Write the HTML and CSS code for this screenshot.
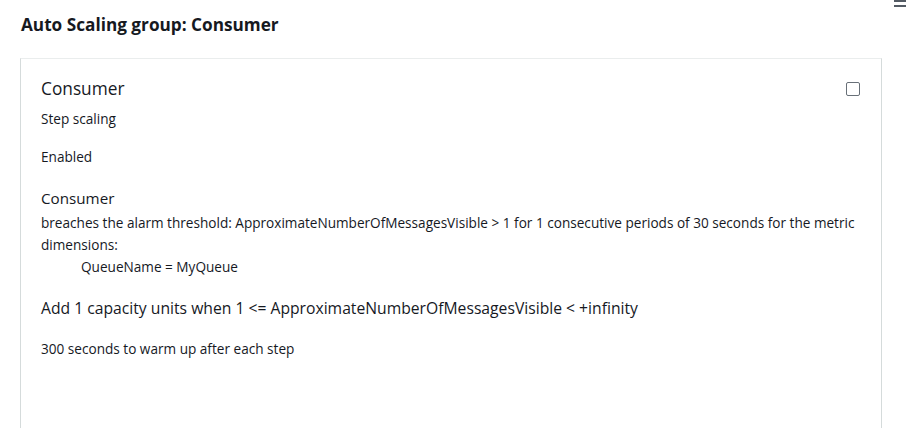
FILE: index.html
```html
<!DOCTYPE html>
<html>
<head>
<meta charset="utf-8">
<link rel="stylesheet" href="styles.css">
</head>
<body>
<div class="menu-icon"><span></span><span></span></div>
<h1 class="page-title">Auto Scaling group: Consumer</h1>
<div class="card">
  <div class="card-head">
    <div class="policy-name">Consumer</div>
    <span class="checkbox"></span>
  </div>
  <div class="line type">Step scaling</div>
  <div class="line enabled">Enabled</div>
  <div class="alarm-name">Consumer</div>
  <div class="alarm-desc">breaches the alarm threshold: ApproximateNumberOfMessagesVisible &gt; 1 for 1 consecutive periods of 30 seconds for the metric dimensions:</div>
  <div class="dimension">QueueName = MyQueue</div>
  <div class="step">Add 1 capacity units when 1 &lt;= ApproximateNumberOfMessagesVisible &lt; +infinity</div>
  <div class="line warmup">300 seconds to warm up after each step</div>
</div>
</body>
</html>
```
FILE: styles.css
```css
html, body {
  margin: 0;
  padding: 0;
  background: #fff;
  color: #16191f;
  font-family: "Open Sans", "Noto Sans", sans-serif;
  overflow: hidden;
}
body {
  padding: 0 25px 0 20px;
  height: 428px;
  box-sizing: border-box;
  position: relative;
  display: flex;
  flex-direction: column;
}
.menu-icon {
  position: absolute;
  top: 0;
  right: 1px;
  width: 12px;
  display: flex;
  flex-direction: column;
  gap: 3px;
}
.menu-icon span {
  display: block;
  height: 2px;
  background: #545b64;
}
.page-title {
  margin: 0;
  padding: 15px 0 0 1px;
  font-size: 17.2px;
  font-weight: 700;
  line-height: 20px;
  height: 43px;
  flex: none;
}
.card {
  flex: 1;
  border: 1px solid #d5dbdb;
  border-top-color: #eaeded;
  border-bottom: none;
  padding: 19px 21px 0 20px;
  box-sizing: border-box;
  min-height: 0;
}
.card-head {
  display: flex;
  justify-content: space-between;
  align-items: flex-start;
}
.policy-name {
  font-size: 17.3px;
  line-height: 22px;
}
.alarm-name {
  font-size: 15.2px;
  line-height: 22px;
}
.step {
  font-size: 15.7px;
  line-height: 22px;
}
.checkbox {
  width: 12px;
  height: 12px;
  border: 1px solid #687078;
  border-radius: 2px;
  margin-top: 4px;
}
.line {
  font-size: 13.6px;
  line-height: 20px;
}
.type { margin-top: 9px; }
.enabled { margin-top: 18px; }
.alarm-name { margin-top: 20px; }
.alarm-desc {
  font-size: 13.6px;
  line-height: 22px;
  margin-top: 3px;
}
.dimension {
  font-size: 13.6px;
  line-height: 22px;
  padding-left: 40px;
}
.step { margin-top: 19px; }
.warmup { margin-top: 20px; }
```
